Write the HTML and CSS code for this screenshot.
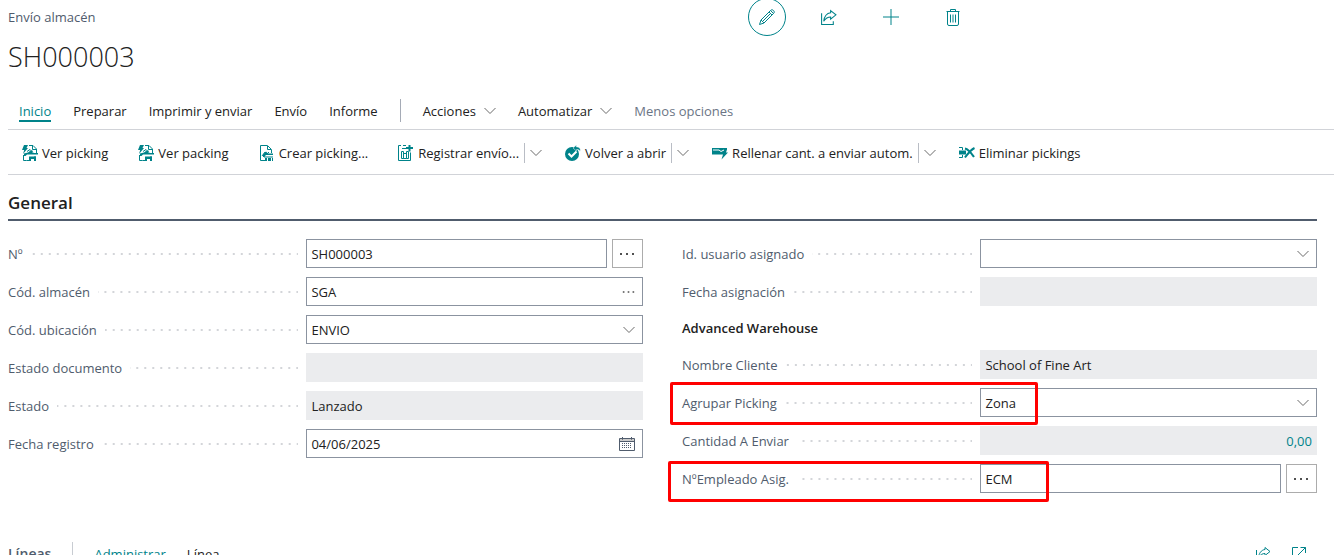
FILE: index.html
```html
<!DOCTYPE html>
<html lang="es">
<head>
  <meta charset="UTF-8" />
  <meta name="viewport" content="width=device-width, initial-scale=1.0" />
  <title>Envío almacén - SH000003</title>
  <link rel="stylesheet" href="styles.css">
</head>
<body>
  <!-- iconos compartidos -->
  <svg class="sprite" aria-hidden="true">
    <symbol id="chevron" viewBox="0 0 12 8"><path d="M.5 1l5.500 5.500L11.500 1" fill="none" stroke="currentColor" /></symbol>
    <symbol id="dots" viewBox="0 0 16 4"><path d="M1 1h2v2H1zM7 1h2v2H7zM13 1h2v2h-2z" fill="currentColor" /></symbol>
    <symbol id="share" viewBox="0 0 16 16"><path d="M1.500 4v10.500h11V11.500M10 1.500l5 4-5 4V7.500C7.500 7.500 5.500 8.500 3.500 11.500 4 7.500 6 4 10 3.500z" fill="none" stroke="currentColor" /></symbol>
    <symbol id="doc-bolt" viewBox="0 0 16 16">
      <path d="M7 .5h4l3.500 3.500v4M1.500 10v5.500h3M10.500 1v3.500H14M5 6.500l3-2 3 3" fill="none" stroke="currentColor" />
      <path d="M2 0h4L4.500 3H6L1 9l1.200-4H0zM2 8.500l4-1L8 6l3 2h5v1.500H5L3.500 11H2zM7 11.500h7V16h-2v-2h-3v2H7zM8.500 5.500h2v2h-2z" fill="currentColor" />
      <path d="M4.500 15.500h3M13 11v4.500" fill="none" stroke="currentColor" />
    </symbol>
    <symbol id="doc-new" viewBox="0 0 16 16">
      <path d="M6 15.500H1.500V.5h7l4 4V8M8.500 1v3.500H12M3 11l3-4 2 2 2-2" fill="none" stroke="currentColor" />
      <path d="M4 9.500l3-3 2 2h5v1.500H7L5 12H4zM5 11.500h9v1H5zM6 13h2v3H6zM9 13h3v3H9zM13 13h1v3h-1z" fill="currentColor" />
    </symbol>
    <symbol id="post" viewBox="0 0 16 16">
      <path d="M3 .5H.5v15h12V7.500M3.500 13.500v-7h2v7zM5.500 13.500v-5h3v5zM8.500 13.500v-7h2v7zM4 3.500h4M5 .5h3" fill="none" stroke="currentColor" />
      <path d="M10.500 0h2v2H15v2h-2.500v2.500h-2V4H8V2h2.500z" fill="currentColor" />
    </symbol>
    <symbol id="reopen" viewBox="0 0 16 16">
      <circle cx="7" cy="9" r="7" fill="currentColor" />
      <path d="M3.500 8.500l3 3 5-5" fill="none" stroke="#fff" stroke-width="2" />
      <path d="M8 3l3.500-3v2c3 0 4.500 1.500 3.500 4.500-.5-1.500-1.500-2-3.500-2V6z" fill="currentColor" stroke="#fff" stroke-width=".5" />
    </symbol>
    <symbol id="autofill" viewBox="0 0 16 16">
      <path d="M0 3h15v1.500h-2L9 9.500H0zM12.500 4.500H15l-1 3h2L9.500 14.500l1.500-5H9z" fill="currentColor" />
      <path d="M1 5h6l2 1.500L12 5" fill="none" stroke="#fff" />
    </symbol>
    <symbol id="delete-lines" viewBox="0 0 16 16">
      <path d="M0 2.500h3.500V5M0 12.500h3.500V10M0 7.500h7" fill="none" stroke="currentColor" />
      <path d="M0 5.500h7v4H0z" fill="currentColor" />
      <path d="M6 3.500c4 1 6.500 5 9 8.500M15.500 3c-4 2-6.500 5.500-9.500 9.500" fill="none" stroke="currentColor" stroke-width="2" />
    </symbol>
    <symbol id="calendar" viewBox="0 0 16 16">
      <path d="M.5 2.500h15v12H.5zM.5 5.500h15M3.500 1v3M12.500 1v3" fill="none" stroke="currentColor" />
      <path d="M1 4h14" stroke="#999" />
      <path d="M3 7.500h10M3 9.500h10M3 11.500h10" stroke="currentColor" stroke-dasharray="1 1" />
    </symbol>
  </svg>

  <div class="page">
    <header class="header">
      <span class="caption">Envío almacén</span>
      <div class="header-tools">
        <button class="tool tool-edit" aria-label="Editar">
          <svg width="18" height="18" viewBox="0 0 18 18" fill="none" stroke="currentColor"><path d="M1.500 16.500L3 12 12.500 2.500c1-1 2-1 3 0s1 2 0 3L6 15zM3 12l3 3M11 4l3 3M4.500 13.500l8-8M12.500 2.500l3 3" /></svg>
        </button>
        <button class="tool" aria-label="Compartir"><svg width="17" height="17"><use href="#share" /></svg></button>
        <button class="tool" aria-label="Nuevo">
          <svg width="16" height="16" viewBox="0 0 16 16" stroke="currentColor"><path d="M8 0v16M0 8h16" /></svg>
        </button>
        <button class="tool" aria-label="Eliminar">
          <svg width="14" height="17" viewBox="0 0 14 17" fill="none" stroke="currentColor"><path d="M.5 2.500h13M4.500 2V.5h5V2M1.500 3v12q0 1.500 1.500 1.500h8q1.500 0 1.500-1.500V3M4.500 5.500v8M7 5.500v8M9.500 5.500v8" /></svg>
        </button>
      </div>
    </header>

    <h1>SH000003</h1>

    <nav class="tabs">
      <button class="tab active">Inicio</button>
      <button class="tab">Preparar</button>
      <button class="tab">Imprimir y enviar</button>
      <button class="tab">Envío</button>
      <button class="tab">Informe</button>
      <span class="tabs-separator"></span>
      <button class="tab">Acciones <svg class="chevron"><use href="#chevron" /></svg></button>
      <button class="tab">Automatizar <svg class="chevron"><use href="#chevron" /></svg></button>
      <button class="tab muted">Menos opciones</button>
    </nav>

    <div class="actions">
      <button class="action"><svg class="icon"><use href="#doc-bolt" /></svg>Ver picking</button>
      <button class="action"><svg class="icon"><use href="#doc-bolt" /></svg>Ver packing</button>
      <button class="action"><svg class="icon"><use href="#doc-new" /></svg>Crear picking...</button>
      <div class="split">
        <button class="action"><svg class="icon"><use href="#post" /></svg>Registrar envío...</button>
        <button class="split-more" aria-label="Más opciones de registro"><svg class="chevron"><use href="#chevron" /></svg></button>
      </div>
      <div class="split">
        <button class="action"><svg class="icon"><use href="#reopen" /></svg>Volver a abrir</button>
        <button class="split-more" aria-label="Más opciones de estado"><svg class="chevron"><use href="#chevron" /></svg></button>
      </div>
      <div class="split">
        <button class="action"><svg class="icon"><use href="#autofill" /></svg>Rellenar cant. a enviar autom.</button>
        <button class="split-more" aria-label="Más opciones de cantidad"><svg class="chevron"><use href="#chevron" /></svg></button>
      </div>
      <button class="action"><svg class="icon"><use href="#delete-lines" /></svg>Eliminar pickings</button>
    </div>

    <main class="content">
      <h2>General</h2>
      <div class="columns">
        <div class="column">
          <div class="field">
            <label for="no">Nº</label>
            <div class="control">
              <input type="text" id="no" value="SH000003" />
              <button class="assist" aria-label="Elegir número"><svg class="dots"><use href="#dots" /></svg></button>
            </div>
          </div>
          <div class="field">
            <label for="location">Cód. almacén</label>
            <div class="control">
              <input type="text" id="location" value="SGA" />
              <button class="lookup" aria-label="Buscar almacén"><svg class="dots small"><use href="#dots" /></svg></button>
            </div>
          </div>
          <div class="field">
            <label for="bin">Cód. ubicación</label>
            <div class="control">
              <select id="bin"><option>ENVIO</option></select>
              <svg class="chevron inside"><use href="#chevron" /></svg>
            </div>
          </div>
          <div class="field">
            <label for="docStatus">Estado documento</label>
            <div class="control"><input type="text" id="docStatus" readonly /></div>
          </div>
          <div class="field">
            <label for="status">Estado</label>
            <div class="control"><input type="text" id="status" value="Lanzado" readonly /></div>
          </div>
          <div class="field">
            <label for="postingDate">Fecha registro</label>
            <div class="control">
              <input type="text" id="postingDate" value="04/06/2025" />
              <button class="lookup" aria-label="Abrir calendario"><svg class="icon"><use href="#calendar" /></svg></button>
            </div>
          </div>
        </div>

        <div class="column">
          <div class="field">
            <label for="userId">Id. usuario asignado</label>
            <div class="control">
              <select id="userId"><option></option></select>
              <svg class="chevron inside"><use href="#chevron" /></svg>
            </div>
          </div>
          <div class="field">
            <label for="assignDate">Fecha asignación</label>
            <div class="control"><input type="text" id="assignDate" readonly /></div>
          </div>
          <h3>Advanced Warehouse</h3>
          <div class="field">
            <label for="customer">Nombre Cliente</label>
            <div class="control"><input type="text" id="customer" value="School of Fine Art" readonly /></div>
          </div>
          <div class="field marked">
            <label for="groupPicking">Agrupar Picking</label>
            <div class="control">
              <select id="groupPicking"><option>Zona</option></select>
              <svg class="chevron inside"><use href="#chevron" /></svg>
            </div>
          </div>
          <div class="field">
            <label for="qty">Cantidad A Enviar</label>
            <div class="control"><input type="text" id="qty" class="number" value="0,00" readonly /></div>
          </div>
          <div class="field marked marked-wide">
            <label for="employee">NºEmpleado Asig.</label>
            <div class="control">
              <input type="text" id="employee" value="ECM" />
              <button class="assist" aria-label="Elegir empleado"><svg class="dots"><use href="#dots" /></svg></button>
            </div>
          </div>
        </div>
      </div>

      <section class="lines">
        <h2>Líneas</h2>
        <span class="lines-separator"></span>
        <button class="lines-active">Administrar</button>
        <button>Línea</button>
        <div class="lines-tools">
          <button aria-label="Compartir líneas"><svg class="icon"><use href="#share" /></svg></button>
          <button aria-label="Ampliar líneas">
            <svg class="icon" viewBox="0 0 16 16" fill="none" stroke="currentColor"><path d="M7 1.500H1.500v13h13V9M9.500 1.500h5V7M14.500 1.500L6 10" /></svg>
          </button>
        </div>
      </section>
    </main>
  </div>
</body>
</html>
```
FILE: styles.css
```css
* {
  box-sizing: border-box;
}
body {
  margin: 0;
  background: #fff;
  color: #212121;
  font-family: "Open Sans", "Noto Sans", sans-serif;
  font-size: 13px;
  line-height: 20px;
}
button, input, select {
  font: inherit;
  color: inherit;
}
button {
  display: flex;
  align-items: center;
  padding: 0;
  border: none;
  background: none;
  white-space: nowrap;
}
h1, h2, h3 {
  margin: 0;
}
.sprite {
  display: none;
}
.page {
  height: 100vh;
  overflow: hidden;
  padding-left: 8px;
}
.icon {
  width: 16px;
  height: 16px;
  flex: none;
  color: #00838a;
}
.chevron {
  width: 12px;
  height: 8px;
  flex: none;
  color: #6b6b6b;
}
.dots {
  width: 16px;
  height: 4px;
  color: #505050;
}
.dots.small {
  width: 13px;
}

/* cabecera */
.header {
  display: grid;
  grid-template-columns: 56% 1fr;
  grid-template-rows: 34px;
  align-items: center;
}
.caption {
  color: #505c6d;
}
.header-tools {
  display: flex;
  align-items: center;
  gap: 24px;
  height: 34px;
  margin-left: -3px;
}
.tool {
  justify-content: center;
  width: 38px;
  height: 38px;
  color: #00838a;
}
.tool-edit {
  border: 1px solid #00838a;
  border-radius: 50%;
}
h1 {
  padding-top: 3px;
  font-size: 27px;
  font-weight: 300;
  line-height: 40px;
}

/* menú */
.tabs {
  display: flex;
  align-items: center;
  gap: 22px;
  margin-top: 15px;
  padding-left: 11px;
  height: 38px;
  border-bottom: 1px solid #d1d3d8;
}
.tab {
  gap: 8px;
  height: 22px;
  padding-top: 2px;
  border-bottom: 2px solid transparent;
}
.tab.active {
  color: #00838a;
  border-color: #00838a;
}
.tab.muted {
  color: #6b7585;
}
.tabs-separator {
  width: 1px;
  height: 23px;
  background: #a5abb6;
}
.actions {
  display: flex;
  align-items: center;
  gap: 30px;
  height: 45px;
  padding: 2px 0 0 14px;
  border-bottom: 1px solid #d1d3d8;
}
.action {
  gap: 4px;
}
.split {
  display: flex;
  gap: 5px;
  margin-right: -7px;
}
.split-more {
  padding-left: 5px;
  border-left: 1px solid #b9bdc5;
}

/* ficha */
.content {
  margin-right: 17px;
}
h2 {
  font-size: 17px;
  font-weight: 600;
  line-height: 24px;
}
.content > h2 {
  padding: 16px 0 4px;
  border-bottom: 2px solid #505c6d;
}
.columns {
  display: grid;
  grid-template-columns: 1fr 1fr;
  gap: 39px;
  padding-top: 18px;
}
.column {
  display: flex;
  flex-direction: column;
  gap: 9px;
}
h3 {
  font-size: 13px;
  font-weight: 600;
  line-height: 26px;
}
.field {
  position: relative;
  display: grid;
  grid-template-columns: 47% 53%;
  height: 29px;
}
.field label {
  display: flex;
  align-items: center;
  gap: 8px;
  padding-right: 8px;
  color: #505c6d;
  white-space: nowrap;
}
.field label::after {
  content: "";
  flex: 1;
  height: 2px;
  background: linear-gradient(90deg, transparent 6px, #d3d5d9 6px) right / 8px 2px repeat-x;
}
.control {
  position: relative;
  display: flex;
  gap: 5px;
}
.control input, .control select {
  flex: 1;
  min-width: 0;
  height: 29px;
  padding: 0 4px;
  border: 1px solid #8b93a0;
  border-radius: 0;
  background: #fff;
  appearance: none;
  outline: none;
}
.control input:read-only {
  border-color: #ebecee;
  background: #ebecee;
}
.control .number {
  color: #00838a;
  text-align: right;
}
.assist {
  justify-content: center;
  width: 31px;
  border: 1px solid #acacac;
}
.lookup {
  position: absolute;
  top: 0;
  right: 8px;
  height: 29px;
}
.lookup .icon {
  color: #505c6d;
}
.chevron.inside {
  position: absolute;
  top: 11px;
  right: 8px;
  pointer-events: none;
}

/* recuadro rojo sobre el campo */
.marked::after {
  content: "";
  position: absolute;
  top: -6px;
  bottom: -8px;
  left: -12px;
  width: 57%;
  border: 3px solid #f00;
  border-radius: 2px;
  pointer-events: none;
}
.marked-wide::after {
  top: -3px;
  bottom: -9px;
  left: -14px;
  width: 59%;
}

/* líneas */
.lines {
  display: flex;
  align-items: center;
  gap: 21px;
  margin-top: 49px;
  height: 24px;
}
.lines h2 {
  color: #505c6d;
  font-size: 14px;
}
.lines-separator {
  width: 1px;
  height: 24px;
  background: #c8ccd2;
}
.lines-active {
  color: #00838a;
}
.lines-tools {
  display: flex;
  gap: 20px;
  margin-left: auto;
  padding-right: 10px;
}
```
